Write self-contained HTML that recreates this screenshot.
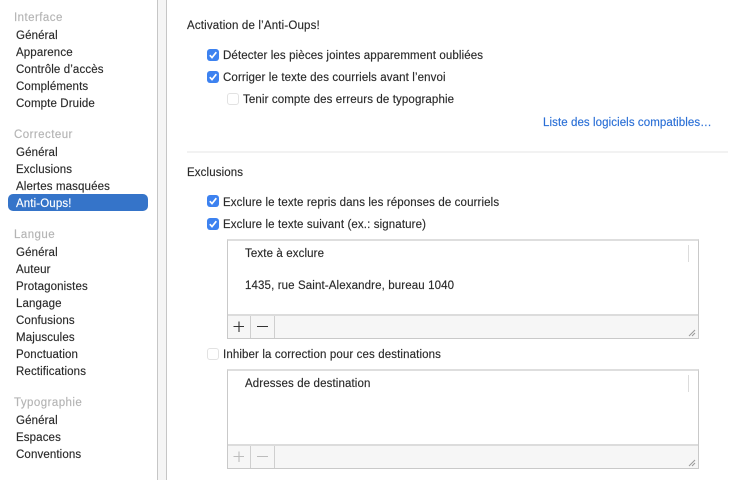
<!DOCTYPE html>
<html lang="fr"><head><meta charset="utf-8"><style>
html,body{margin:0;padding:0;background:#fff}
#p{position:relative;width:746px;height:480px;overflow:hidden;background:#fff;font-family:"Liberation Sans",sans-serif;font-size:11.5px;letter-spacing:.12px;color:#2a2a2a;filter:blur(.3px)}
.t{position:absolute;white-space:nowrap;line-height:14px;height:14px;-webkit-text-stroke:.15px currentColor}
.h{color:#b4b4b4;font-weight:400;letter-spacing:.45px}
.r{position:absolute}
.c{position:absolute;width:12px;height:12px;border-radius:3px;background:#3d82f0}
.c svg{position:absolute;left:0;top:0}
.u{position:absolute;width:10px;height:10px;border-radius:3px;border:1px solid #e2e2e2;background:#fff}
</style></head><body><div id="p">
<div class="r" style="left:157px;top:0;width:10px;height:480px;background:#f5f5f5;box-sizing:border-box;border-left:1px solid #c6c6c6;border-right:1px solid #c6c6c6"></div>
<div class="r" style="left:8px;top:194px;width:140px;height:17px;border-radius:5px;background:#3574c9"></div>

<span class="t h" style="left:14px;top:11px">Interface</span>
<span class="t" style="left:16px;top:29px">Général</span>
<span class="t" style="left:16px;top:46px">Apparence</span>
<span class="t" style="left:16px;top:63px">Contrôle d’accès</span>
<span class="t" style="left:16px;top:80px">Compléments</span>
<span class="t" style="left:16px;top:97px">Compte Druide</span>
<span class="t h" style="left:14px;top:128px">Correcteur</span>
<span class="t" style="left:16px;top:146px">Général</span>
<span class="t" style="left:16px;top:163px">Exclusions</span>
<span class="t" style="left:16px;top:180px">Alertes masquées</span>
<span class="t" style="left:16px;top:197px;color:#fff">Anti-Oups!</span>
<span class="t h" style="left:14px;top:228px">Langue</span>
<span class="t" style="left:16px;top:246px">Général</span>
<span class="t" style="left:16px;top:263px">Auteur</span>
<span class="t" style="left:16px;top:280px">Protagonistes</span>
<span class="t" style="left:16px;top:297px">Langage</span>
<span class="t" style="left:16px;top:314px">Confusions</span>
<span class="t" style="left:16px;top:331px">Majuscules</span>
<span class="t" style="left:16px;top:348px">Ponctuation</span>
<span class="t" style="left:16px;top:365px">Rectifications</span>
<span class="t h" style="left:14px;top:396px">Typographie</span>
<span class="t" style="left:16px;top:414px">Général</span>
<span class="t" style="left:16px;top:431px">Espaces</span>
<span class="t" style="left:16px;top:448px">Conventions</span>

<span class="t" style="left:187px;top:19px;letter-spacing:.17px">Activation de l’Anti-Oups!</span>
<div class="c" style="left:207px;top:49px"><svg width="12" height="12" viewBox="0 0 12 12"><path d="M2.8 6.2 L5 8.6 L9.3 3.2" fill="none" stroke="#fff" stroke-width="1.7"/></svg></div>
<span class="t" style="left:223px;top:49px">Détecter les pièces jointes apparemment oubliées</span>
<div class="c" style="left:207px;top:71px"><svg width="12" height="12" viewBox="0 0 12 12"><path d="M2.8 6.2 L5 8.6 L9.3 3.2" fill="none" stroke="#fff" stroke-width="1.7"/></svg></div>
<span class="t" style="left:223px;top:71px">Corriger le texte des courriels avant l’envoi</span>
<div class="u" style="left:227px;top:93px"></div>
<span class="t" style="left:243px;top:93px">Tenir compte des erreurs de typographie</span>
<span class="t" style="left:543px;top:116px;color:#2a6fd6;letter-spacing:.08px">Liste des logiciels compatibles…</span>
<div class="r" style="left:187px;top:151px;width:541px;height:2px;background:#f2f2f2"></div>

<span class="t" style="left:187px;top:166px">Exclusions</span>
<div class="c" style="left:207px;top:195px"><svg width="12" height="12" viewBox="0 0 12 12"><path d="M2.8 6.2 L5 8.6 L9.3 3.2" fill="none" stroke="#fff" stroke-width="1.7"/></svg></div>
<span class="t" style="left:223px;top:196px">Exclure le texte repris dans les réponses de courriels</span>
<div class="c" style="left:207px;top:218px"><svg width="12" height="12" viewBox="0 0 12 12"><path d="M2.8 6.2 L5 8.6 L9.3 3.2" fill="none" stroke="#fff" stroke-width="1.7"/></svg></div>
<span class="t" style="left:223px;top:218px">Exclure le texte suivant (ex.: signature)</span>

<!-- first box -->
<div class="r" style="left:227px;top:239px;width:472px;height:100px;box-sizing:border-box;border:1px solid #c9c9c9;border-top:2px solid #dedede;background:#fff"></div>
<div class="r" style="left:688px;top:245px;width:1px;height:17px;background:#dcdcdc"></div>
<span class="t" style="left:245px;top:247px">Texte à exclure</span>
<span class="t" style="left:245px;top:279px">1435, rue Saint-Alexandre, bureau 1040</span>
<div class="r" style="left:228px;top:314px;width:470px;height:24px;background:#f6f6f6;border-top:2px solid #dcdcdc;box-sizing:border-box"></div>
<div class="r" style="left:250px;top:316px;width:1px;height:22px;background:#cfcfcf"></div>
<div class="r" style="left:274px;top:316px;width:1px;height:22px;background:#cfcfcf"></div>
<svg class="r" style="left:228px;top:316px" width="50" height="22"><path d="M11 5.5V16M5.5 10.5H16M29 10.5H40" stroke="#333" stroke-width="1.1" fill="none"/></svg>
<svg class="r" style="left:688px;top:329px" width="9" height="8"><path d="M1 7L7 1M4 7L7 4" stroke="#999" stroke-width="1" fill="none"/></svg>

<div class="u" style="left:207px;top:348px"></div>
<span class="t" style="left:223px;top:348px">Inhiber la correction pour ces destinations</span>

<!-- second box -->
<div class="r" style="left:227px;top:369px;width:472px;height:100px;box-sizing:border-box;border:1px solid #c9c9c9;border-top:2px solid #dedede;background:#fff"></div>
<div class="r" style="left:688px;top:375px;width:1px;height:17px;background:#dcdcdc"></div>
<span class="t" style="left:245px;top:377px">Adresses de destination</span>
<div class="r" style="left:228px;top:444px;width:470px;height:24px;background:#f6f6f6;border-top:2px solid #dcdcdc;box-sizing:border-box"></div>
<div class="r" style="left:250px;top:446px;width:1px;height:22px;background:#cfcfcf"></div>
<div class="r" style="left:274px;top:446px;width:1px;height:22px;background:#cfcfcf"></div>
<svg class="r" style="left:228px;top:446px" width="50" height="22"><path d="M11 5.5V16M5.5 10.5H16M29 10.5H40" stroke="#bcbcbc" stroke-width="1.1" fill="none"/></svg>
<svg class="r" style="left:688px;top:459px" width="9" height="8"><path d="M1 7L7 1M4 7L7 4" stroke="#999" stroke-width="1" fill="none"/></svg>
</div></body></html>
